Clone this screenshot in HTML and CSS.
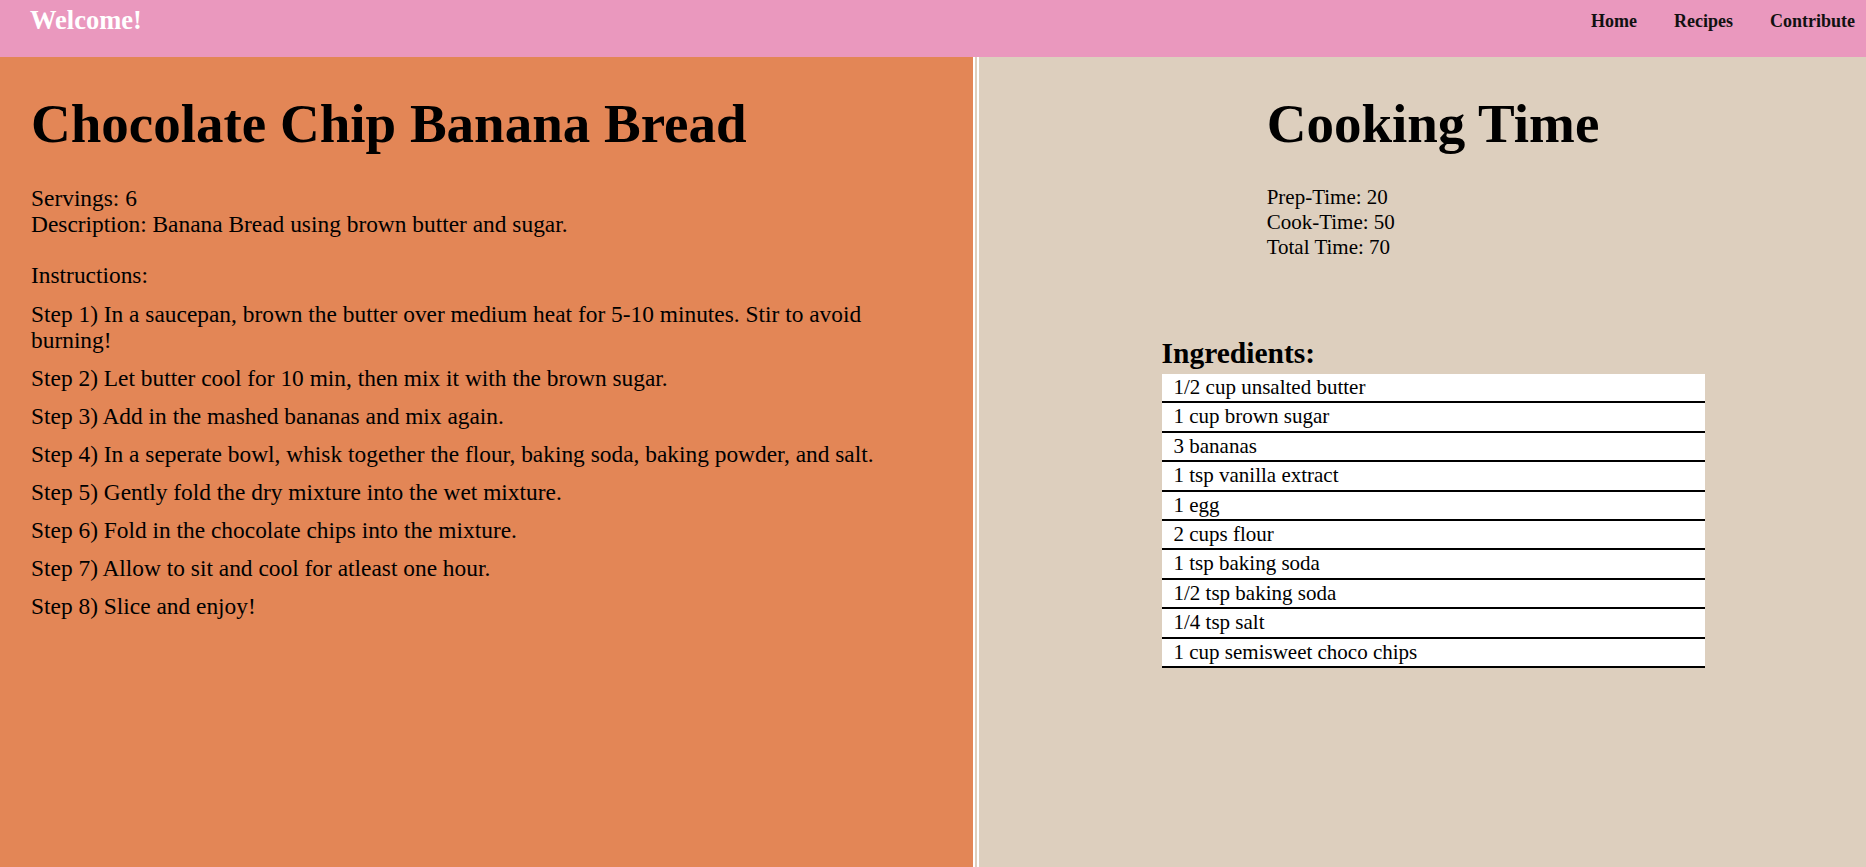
FILE: index.html
```html
<!DOCTYPE html>
<html lang="en">
<head>
<meta charset="utf-8">
<title>Chocolate Chip Banana Bread</title>
<link rel="stylesheet" href="styles.css">
</head>
<body>
<header class="topbar">
  <div class="brand">Welcome!</div>
  <nav class="nav">
    <a href="#">Home</a>
    <a href="#">Recipes</a>
    <a href="#">Contribute</a>
  </nav>
</header>
<main class="page">
  <section class="recipe">
    <h1 class="title">Chocolate Chip Banana Bread</h1>
    <p class="meta">Servings: 6<br>Description: Banana Bread using brown butter and sugar.</p>
    <p class="label">Instructions:</p>
    <p class="step step-first">Step 1) In a saucepan, brown the butter over medium heat for 5-10 minutes. Stir to avoid burning!</p>
    <p class="step">Step 2) Let butter cool for 10 min, then mix it with the brown sugar.</p>
    <p class="step">Step 3) Add in the mashed bananas and mix again.</p>
    <p class="step">Step 4) In a seperate bowl, whisk together the flour, baking soda, baking powder, and salt.</p>
    <p class="step">Step 5) Gently fold the dry mixture into the wet mixture.</p>
    <p class="step">Step 6) Fold in the chocolate chips into the mixture.</p>
    <p class="step">Step 7) Allow to sit and cool for atleast one hour.</p>
    <p class="step">Step 8) Slice and enjoy!</p>
  </section>
  <aside class="side">
    <div class="cooking">
      <h1 class="title">Cooking Time</h1>
      <div class="times">
        <div>Prep-Time: 20</div>
        <div>Cook-Time: 50</div>
        <div>Total Time: 70</div>
      </div>
    </div>
    <div class="ingredients">
      <h2 class="ing-title">Ingredients:</h2>
      <ul class="ing-list">
        <li>1/2 cup unsalted butter</li>
        <li>1 cup brown sugar</li>
        <li>3 bananas</li>
        <li>1 tsp vanilla extract</li>
        <li>1 egg</li>
        <li>2 cups flour</li>
        <li>1 tsp baking soda</li>
        <li>1/2 tsp baking soda</li>
        <li>1/4 tsp salt</li>
        <li>1 cup semisweet choco chips</li>
      </ul>
    </div>
  </aside>
</main>
</body>
</html>
```
FILE: styles.css
```css
* { box-sizing: border-box; }

html, body {
  margin: 0;
  padding: 0;
}

body {
  font-family: "Liberation Serif", "Times New Roman", serif;
  color: #000;
  min-height: 100vh;
  display: flex;
  flex-direction: column;
}

.topbar {
  height: 57px;
  background: #ea98be;
  display: flex;
  justify-content: space-between;
  align-items: flex-start;
  flex: 0 0 57px;
}

.brand {
  color: #fff;
  font-weight: bold;
  font-size: 26.5px;
  line-height: 26px;
  padding: 7px 0 0 30px;
}

.nav {
  display: flex;
  gap: 37px;
  padding: 12px 11px 0 0;
}

.nav a {
  color: #111;
  text-decoration: none;
  font-weight: bold;
  font-size: 18px;
  line-height: 18px;
}

.page {
  flex: 1;
  display: flex;
}

.recipe {
  flex: 0 0 973px;
  background: #e38656;
  padding: 0 60px 0 31px;
}

.title {
  margin: 39px 0 0;
  font-size: 55px;
  line-height: 55px;
  font-weight: bold;
  white-space: nowrap;
}

.recipe p {
  margin: 0;
  font-size: 23.4px;
  line-height: 26px;
}

.recipe .meta { margin-top: 34px; }
.recipe .label { margin-top: 25px; }
.recipe .step { margin-top: 12px; }
.recipe .step-first { margin-top: 13px; }

.side {
  flex: 1;
  background: #ddcfbe;
  border-left: 6px double #fff;
  padding-left: 21px;
  display: flex;
  flex-direction: column;
  align-items: center;
}

.cooking {
  width: fit-content;
}

.times {
  margin-top: 34px;
  font-size: 21px;
  line-height: 25px;
}

.ingredients {
  width: 543px;
  margin-top: 78px;
}

.ing-title {
  margin: 0 0 6px;
  font-size: 29.5px;
  line-height: 30px;
  font-weight: bold;
}

.ing-list {
  list-style: none;
  margin: 0;
  padding: 0;
  background: #fff;
}

.ing-list li {
  font-size: 21px;
  line-height: 27.4px;
  padding-left: 12px;
  border-bottom: 2px solid #000;
}
```
